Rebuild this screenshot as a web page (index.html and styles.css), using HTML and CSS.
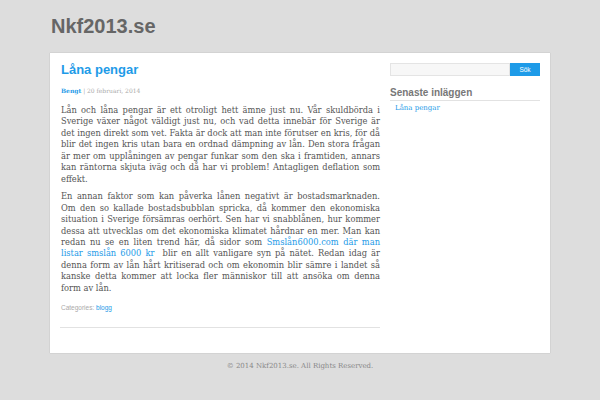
FILE: index.html
```html
<!DOCTYPE html>
<html lang="sv">
<head>
<meta charset="utf-8">
<title>Nkf2013.se</title>
<link rel="stylesheet" href="styles.css">
</head>
<body>
<div class="wrap">
  <header class="site-header">
    <h1 class="site-title">Nkf2013.se</h1>
  </header>
  <div class="box">
    <main class="content">
      <article class="post">
        <h2 class="post-title">Låna pengar</h2>
        <div class="meta"><a class="author" href="#">Bengt</a> | 20 februari, 2014</div>
        <p class="text">
          <span class="ln">Lån och låna pengar är ett otroligt hett ämne just nu. Vår skuldbörda i</span>
          <span class="ln">Sverige växer något väldigt just nu, och vad detta innebär för Sverige är</span>
          <span class="ln">det ingen direkt som vet. Fakta är dock att man inte förutser en kris, för då</span>
          <span class="ln">blir det ingen kris utan bara en ordnad dämpning av lån. Den stora frågan</span>
          <span class="ln">är mer om upplåningen av pengar funkar som den ska i framtiden, annars</span>
          <span class="ln">kan räntorna skjuta iväg och då har vi problem! Antagligen deflation som</span>
          <span class="ln last">effekt.</span>
        </p>
        <p class="text">
          <span class="ln">En annan faktor som kan påverka lånen negativt är bostadsmarknaden.</span>
          <span class="ln">Om den so kallade bostadsbubblan spricka, då kommer den ekonomiska</span>
          <span class="ln">situation i Sverige försämras oerhört. Sen har vi snabblånen, hur kommer</span>
          <span class="ln">dessa att utvecklas om det ekonomiska klimatet hårdnar en mer. Man kan</span>
          <span class="ln">redan nu se en liten trend här, då sidor som <a href="#">Smslån6000.com där man</a></span>
          <span class="ln"><a href="#">listar smslån 6000 kr</a>&nbsp; blir en allt vanligare syn på nätet. Redan idag är</span>
          <span class="ln">denna form av lån hårt kritiserad och om ekonomin blir sämre i landet så</span>
          <span class="ln">kanske detta kommer att locka fler människor till att ansöka om denna</span>
          <span class="ln last">form av lån.</span>
        </p>
        <div class="cats">Categories: <a href="#">blogg</a></div>
      </article>
    </main>
    <aside class="sidebar">
      <form class="search">
        <input class="search-input" type="text">
        <button class="search-btn" type="button">Sök</button>
      </form>
      <h3 class="widget-title">Senaste inläggen</h3>
      <ul class="recent">
        <li><a href="#">Låna pengar</a></li>
      </ul>
    </aside>
  </div>
  <footer class="footer">© 2014 Nkf2013.se. All Rights Reserved.</footer>
</div>
</body>
</html>
```
FILE: styles.css
```css
html, body {
  margin: 0;
  padding: 0;
}
body {
  background: #dddddd;
  font-family: "DejaVu Serif", serif;
  color: #555;
}
a {
  color: #1e9be8;
  text-decoration: none;
}
.wrap {
  width: 500px;
  margin: 0 auto;
}
.site-header {
  height: 53px;
  display: flex;
  align-items: center;
}
.site-title {
  margin: 0 0 0 1px;
  font-family: "Liberation Sans", Arial, sans-serif;
  font-size: 20px;
  font-weight: bold;
  color: #666;
}
.box {
  background: #fff;
  display: flex;
  align-items: flex-start;
  padding: 9px 10px 25px 11px;
  box-shadow: 0 0 1px rgba(0,0,0,0.25);
}
.content {
  width: 319px;
  flex: none;
}
.post {
  border-bottom: 1px solid #e2e2e2;
  padding-bottom: 14px;
  margin-left: -1px;
  padding-left: 1px;
}
.post-title {
  margin: 0;
  font-family: "Liberation Sans", Arial, sans-serif;
  font-size: 13px;
  font-weight: bold;
  color: #1e9be8;
  line-height: 16px;
}
.meta {
  margin-top: 8px;
  font-size: 6px;
  color: #aaa;
  line-height: 10px;
}
.meta .author {
  font-weight: bold;
}
.text {
  margin: 9px 0 6px;
  font-size: 8.3px;
  line-height: 11.45px;
  color: #555;
}
.text + .text {
  margin-top: 0;
}
.ln {
  display: block;
  white-space: nowrap;
  text-align: justify;
  text-align-last: justify;
}
.ln.last {
  text-align-last: left;
}
.cats {
  font-family: "Liberation Sans", Arial, sans-serif;
  font-size: 6.5px;
  color: #aaa;
  line-height: 10px;
  margin-top: 9px;
}
.sidebar {
  margin-left: 10px;
  width: 150px;
  flex: none;
  padding-top: 1px;
}
.search {
  display: flex;
  margin: 0;
}
.search-input {
  width: 120px;
  height: 13px;
  box-sizing: border-box;
  border: 1px solid #e4e4e4;
  background: #f7f7f7;
  margin: 0;
  padding: 0;
}
.search-btn {
  width: 30px;
  height: 13px;
  border: 0;
  margin: 0;
  padding: 0;
  background: #1e9be8;
  color: #fff;
  font-family: "Liberation Sans", Arial, sans-serif;
  font-size: 6.5px;
}
.widget-title {
  margin: 11px 0 0;
  padding-bottom: 1px;
  border-bottom: 1px solid #e2e2e2;
  font-family: "Liberation Sans", Arial, sans-serif;
  font-size: 10px;
  line-height: 12px;
  color: #777;
}
.recent {
  list-style: none;
  margin: 2px 0 0;
  padding: 0 0 0 5px;
  font-size: 7px;
  line-height: 10px;
}
.footer {
  text-align: center;
  font-size: 7px;
  color: #888;
  line-height: 10px;
  padding-top: 8px;
}
```
